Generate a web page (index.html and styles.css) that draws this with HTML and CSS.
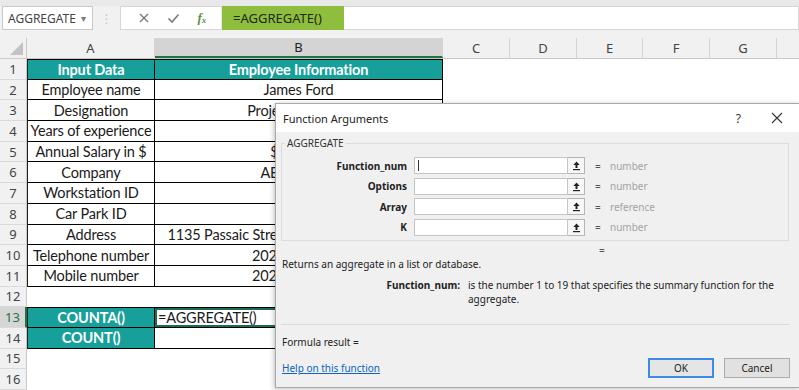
FILE: index.html
```html
<!DOCTYPE html>
<html>
<head>
<meta charset="utf-8">
<link rel="stylesheet" href="styles.css">
</head>
<body>
<div class="app">
  <div class="topstrip"></div>
  <div class="fbar">
    <div class="namebox"><span>AGGREGATE</span><span class="dd">&#9662;</span></div>
    <div class="grip">&#8942;</div>
    <div class="fxbox">
      <svg class="ic" width="12" height="12" viewBox="0 0 12 12"><path d="M2 2 L10 10 M10 2 L2 10" stroke="#7a7a7a" stroke-width="1.4" fill="none"/></svg>
      <svg class="ic" width="13" height="12" viewBox="0 0 13 12"><path d="M1.5 6.5 L5 10 L11.5 2.5" stroke="#7a7a7a" stroke-width="1.6" fill="none"/></svg>
      <span class="fx">f<sub>x</sub></span>
    </div>
    <div class="formula"><span class="fhl">=AGGREGATE()</span></div>
  </div>
  <div class="gapstrip"></div>

  <div class="sheet">
    <div class="row hdr">
      <div class="rh corner"><span class="tri"></span></div>
      <div class="ch cA">A</div>
      <div class="ch cB sel">B</div>
      <div class="ch cC">C</div>
      <div class="ch cD">D</div>
      <div class="ch cE">E</div>
      <div class="ch cF">F</div>
      <div class="ch cG">G</div>
      <div class="ch cR"></div>
    </div>

    <div class="row"><div class="rh">1</div><div class="c cA t tt tl teal">Input Data</div><div class="c cB t tt teal">Employee Information</div></div>
    <div class="row"><div class="rh">2</div><div class="c cA t tl">Employee name</div><div class="c cB t">James Ford</div></div>
    <div class="row"><div class="rh">3</div><div class="c cA t tl">Designation</div><div class="c cB t">Project Manager</div></div>
    <div class="row"><div class="rh">4</div><div class="c cA t tl">Years of experience</div><div class="c cB t">8</div></div>
    <div class="row"><div class="rh">5</div><div class="c cA t tl">Annual Salary in $</div><div class="c cB t">$ 85,000</div></div>
    <div class="row"><div class="rh">6</div><div class="c cA t tl">Company</div><div class="c cB t">ABC Pvt Ltd</div></div>
    <div class="row"><div class="rh">7</div><div class="c cA t tl">Workstation ID</div><div class="c cB t">W12</div></div>
    <div class="row"><div class="rh">8</div><div class="c cA t tl">Car Park ID</div><div class="c cB t">P7</div></div>
    <div class="row"><div class="rh">9</div><div class="c cA t tl">Address</div><div class="c cB t">1135 Passaic Street, Paterson, New Jersey</div></div>
    <div class="row"><div class="rh">10</div><div class="c cA t tl">Telephone number</div><div class="c cB t">202-555-0148</div></div>
    <div class="row"><div class="rh">11</div><div class="c cA t tl">Mobile number</div><div class="c cB t">202-555-0175</div></div>
    <div class="row"><div class="rh">12</div></div>
    <div class="row"><div class="rh selr">13</div><div class="c cA t tt tl teal">COUNTA()</div><div class="c cB t tt active">=AGGREGATE()</div></div>
    <div class="row"><div class="rh">14</div><div class="c cA t tl teal">COUNT()</div><div class="c cB t"></div></div>
    <div class="row"><div class="rh">15</div></div>
    <div class="row"><div class="rh">16</div></div>
  </div>

  <div class="dialog">
    <div class="dlg-title">
      <span>Function Arguments</span>
      <span class="dlg-ctrls">
        <span class="q">?</span>
        <svg width="12" height="12" viewBox="0 0 12 12"><path d="M1 1 L11 11 M11 1 L1 11" stroke="#333" stroke-width="1.1" fill="none"/></svg>
      </span>
    </div>
    <div class="dlg-body">
      <fieldset class="group">
        <legend>AGGREGATE</legend>
        <div class="arg"><label>Function_num</label><div class="inp"><span class="caret"></span></div><div class="refbtn"><svg width="11" height="11" viewBox="0 0 11 11"><path d="M5.5 1.5 L2.3 5 H4.5 V8 H6.5 V5 H8.7 Z" fill="#222"/><path d="M2 9.6 H9" stroke="#222" stroke-width="1.2"/></svg></div><span class="eq">=</span><span class="type">number</span></div>
        <div class="arg"><label>Options</label><div class="inp"></div><div class="refbtn"><svg width="11" height="11" viewBox="0 0 11 11"><path d="M5.5 1.5 L2.3 5 H4.5 V8 H6.5 V5 H8.7 Z" fill="#222"/><path d="M2 9.6 H9" stroke="#222" stroke-width="1.2"/></svg></div><span class="eq">=</span><span class="type">number</span></div>
        <div class="arg"><label>Array</label><div class="inp"></div><div class="refbtn"><svg width="11" height="11" viewBox="0 0 11 11"><path d="M5.5 1.5 L2.3 5 H4.5 V8 H6.5 V5 H8.7 Z" fill="#222"/><path d="M2 9.6 H9" stroke="#222" stroke-width="1.2"/></svg></div><span class="eq">=</span><span class="type">reference</span></div>
        <div class="arg"><label>K</label><div class="inp"></div><div class="refbtn"><svg width="11" height="11" viewBox="0 0 11 11"><path d="M5.5 1.5 L2.3 5 H4.5 V8 H6.5 V5 H8.7 Z" fill="#222"/><path d="M2 9.6 H9" stroke="#222" stroke-width="1.2"/></svg></div><span class="eq">=</span><span class="type">number</span></div>
      </fieldset>
      <div class="eqline">=</div>
      <div class="summary">Returns an aggregate in a list or database.</div>
      <div class="argdesc"><b>Function_num:</b><span>is the number 1 to 19 that specifies the summary function for the aggregate.</span></div>
      <div class="sep"></div>
      <div class="result">Formula result =</div>
      <div class="footer">
        <a class="help" href="#">Help on this function</a>
        <div class="btns"><button class="btn ok">OK</button><button class="btn">Cancel</button></div>
      </div>
    </div>
  </div>
</div>
</body>
</html>
```

FILE: styles.css
```css
* { box-sizing: border-box; }
html, body { margin: 0; padding: 0; background: #fff; }
body { width: 799px; height: 390px; overflow: hidden; font-family: "Noto Sans", "DejaVu Sans", sans-serif; }
.app { position: relative; width: 799px; height: 390px; overflow: hidden; }

.topstrip { height: 6px; background: #e9e9e9; }
.fbar { height: 24px; background: #f1f1f1; display: flex; align-items: stretch; padding-left: 2px; }
.namebox { width: 91px; background: #fff; border: 1px solid #c9c9c9; display: flex; align-items: center; justify-content: space-between; padding: 0 6px 0 5px; font-size: 12px; color: #444; }
.namebox .dd { font-size: 10px; color: #777; }
.grip { width: 27px; display: flex; align-items: center; justify-content: center; color: #c4c4c4; font-size: 12px; }
.fxbox { width: 101px; background: #fff; border: 1px solid #d6d6d6; border-right: none; display: flex; align-items: center; justify-content: space-around; padding: 0 6px 0 8px; }
.fx { font-family: "Liberation Serif", serif; font-style: italic; color: #5d8f4a; font-size: 13px; font-weight: bold; }
.fx sub { font-size: 9px; vertical-align: -1px; }
.formula { flex: 1; background: #fff; border: 1px solid #d6d6d6; border-left: 1px solid #e4e4e4; display: flex; align-items: stretch; }
.fhl { width: 122px; background: #8fbe3f; color: #1c2a10; font-size: 13px; display: flex; align-items: center; padding-left: 11px; margin: -1px 0; }
.gapstrip { height: 8px; background: #f1f1f1; }

.sheet { display: flex; flex-direction: column; }
.row { display: flex; height: 20.7px; }
.row.hdr { height: 21px; background: #f1f1f1; border-bottom: 1px solid #c9c9c9; }
.rh { width: 27px; flex: none; background: #f1f1f1; border-right: 1px solid #c9c9c9; border-bottom: 1px solid #dadada; color: #444; font-size: 13px; display: flex; align-items: center; justify-content: center; }
.rh.selr { background: #d6d6d6; border-right: 2px solid #217346; color: #217346; }
.corner { position: relative; border-bottom: none; }
.tri { position: absolute; right: 3px; bottom: 3px; width: 0; height: 0; border-left: 13px solid transparent; border-bottom: 13px solid #c3c3c3; }
.ch { flex: none; display: flex; align-items: center; justify-content: center; border-right: 1px solid #d4d4d4; font-size: 13px; color: #444; }
.ch.sel { background: #d4d4d4; border-bottom: 2px solid #217346; color: #222; }
.cA { width: 128px; }
.cB { width: 288px; }
.cC { width: 67px; }
.cD { width: 67px; }
.cE { width: 66px; }
.cF { width: 67px; }
.cG { width: 67px; }
.cR { flex: 1; border-right: none; }

.c { flex: none; font-family: Lato, "Liberation Sans", sans-serif; font-size: 14.5px; letter-spacing: -0.15px; color: #1a1a1a; display: flex; align-items: center; justify-content: center; white-space: nowrap; overflow: hidden; }
.t { border-right: 1px solid #000; border-bottom: 1px solid #000; }
.tt { border-top: 1px solid #000; }
.tl { border-left: 1px solid #222; }
.teal { background: #17a09a; color: #fff; font-weight: bold; }
.active { justify-content: flex-start; padding-left: 3px; box-shadow: inset 0 0 0 2px #1d6b57; }

.dialog { position: absolute; left: 275px; top: 103px; width: 525px; height: 285px; background: #f0f0f0; border: 1px solid #a8a8a8; box-shadow: -1px 1px 5px rgba(0,0,0,0.25); font-size: 10px; color: #222; }
.dlg-title { height: 28px; background: #fff; display: flex; align-items: center; justify-content: space-between; padding: 0 16px 0 7px; font-size: 11px; color: #222; }
.dlg-ctrls { display: flex; align-items: center; gap: 30px; }
.q { font-size: 12px; color: #333; }
.dlg-body { padding: 0 10px 0 5px; }
.group { margin: 4px 0 0 0; padding: 7px 0 4px 0; border: 1px solid #dcdcdc; width: 508px; }
.group legend { font-size: 10px; color: #333; padding: 0 2px; margin-left: 3px; line-height: 14px; }
.arg { display: flex; align-items: center; height: 17px; margin-bottom: 3.6px; }
.arg:last-child { margin-bottom: 0; }
.arg label { width: 125px; text-align: right; font-weight: bold; color: #222; margin-right: 7px; }
.inp { width: 154px; height: 17px; background: #fff; border: 1px solid #c5c5c5; display: flex; align-items: center; padding-left: 3px; }
.caret { width: 1px; height: 11px; background: #333; }
.refbtn { width: 17px; height: 17px; border: 1px solid #b5b5b5; border-left: none; background: #f7f7f7; display: flex; align-items: center; justify-content: center; }
.eq { margin-left: 10px; width: 15px; color: #555; }
.type { color: #a3a3a3; }

.eqline { height: 12px; line-height: 12px; margin-top: 3px; padding-left: 318px; color: #555; }
.summary { line-height: 14px; margin-top: 1px; padding-left: 1px; }
.argdesc { display: flex; margin-top: 7px; line-height: 14px; }
.argdesc b { width: 179px; text-align: right; flex: none; }
.argdesc span { margin-left: 8px; width: 320px; }
.sep { height: 1px; background: #dadada; margin-top: 18px; width: 508px; }
.result { margin-top: 10px; line-height: 14px; padding-left: 1px; }
.footer { margin-top: 9px; display: flex; align-items: center; justify-content: space-between; width: 509px; height: 20px; }
.help { color: #0b63c4; text-decoration: underline; padding-left: 1px; }
.btns { display: flex; gap: 10px; }
.btn { width: 66px; height: 20px; font-family: "Noto Sans", sans-serif; font-size: 10px; color: #222; background: #e1e1e1; border: 1px solid #adadad; padding: 0; }
.btn.ok { border: 2px solid #3c8de0; background: #e5e5e5; }
```
